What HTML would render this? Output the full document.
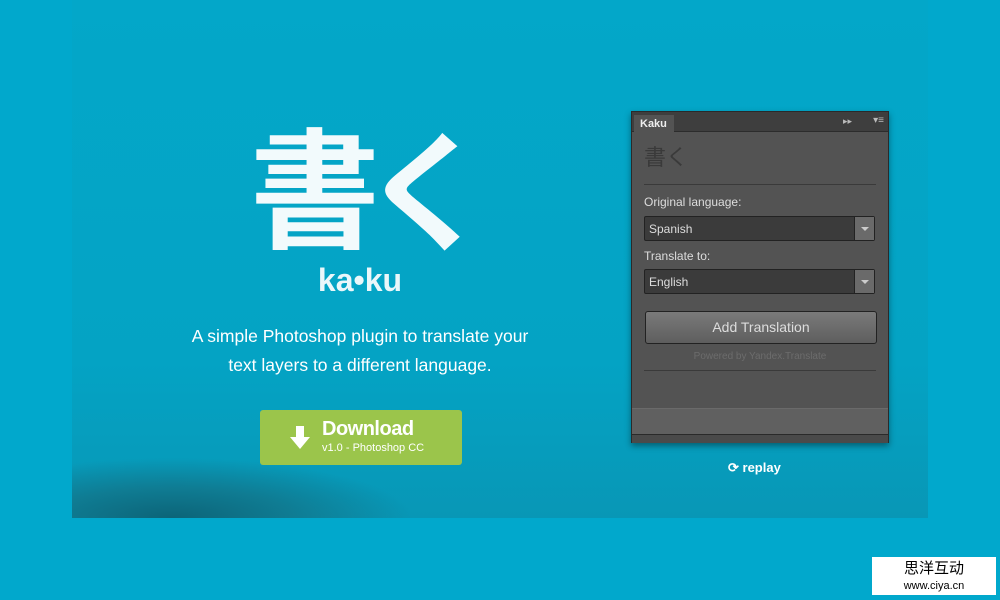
<!DOCTYPE html>
<html><head><meta charset="utf-8"><style>
*{margin:0;padding:0;box-sizing:border-box}
body{width:1000px;height:600px;background:#01a8cc;position:relative;overflow:hidden;font-family:"Liberation Sans",sans-serif}
.hero{position:absolute;left:72px;top:0;width:856px;height:518px;background:linear-gradient(180deg,#03a7c9 0%,#04a3c4 70%,#0897b6 100%)}
.hill{position:absolute;left:72px;top:458px;width:400px;height:60px;background:radial-gradient(ellipse 60% 100% at 25% 100%,#0c6478 0%,#0f7c93 50%,rgba(4,160,195,0) 100%)}
.k{position:absolute;color:#f2fafc;font-family:"Noto Sans CJK JP",sans-serif;font-weight:bold;font-size:130px;line-height:1}
.kaku{position:absolute;left:300px;top:262px;width:120px;text-align:center;color:#eaf7fa;font-weight:bold;font-size:32px}
.tag{position:absolute;left:160px;top:322px;width:400px;text-align:center;color:#fff;font-size:17.5px;line-height:29px}
.dl{position:absolute;left:260px;top:410px;width:202px;height:55px;background:#9bc54b;border-radius:3px;color:#fff}
.panel{position:absolute;left:631px;top:111px;width:258px;height:332px;background:#535353;border:1px solid #2a2a2a;box-shadow:0 3px 6px rgba(0,0,0,.4);color:#ddd;font-size:12px}
.sel{position:absolute;left:12px;width:231px;height:25px;background:#3b3b3b;border:1px solid #222;border-radius:2px;color:#ddd;font-size:12px;padding:5px 4px}
.sel b{position:absolute;right:0;top:0;width:20px;height:23px;background:#6a6a6a;border-left:1px solid #222}
.sel b:after{content:"";position:absolute;left:6px;top:10px;border:4px solid transparent;border-top-color:#ccc}
</style></head><body>
<div class="hero"></div>
<div class="hill"></div>
<div class="k" style="left:250px;top:117px">書</div>
<div class="k" style="left:362px;top:119px">く</div>
<div class="kaku">ka•ku</div>
<div class="tag">A simple Photoshop plugin to translate your<br>text layers to a different language.</div>
<div class="dl">
<svg style="position:absolute;left:29px;top:16px" width="22" height="24" viewBox="0 0 22 24"><path d="M7 0h8v11h6L11 23 1 11h6z" fill="#fff"/></svg>
<div style="position:absolute;left:62px;top:8px;font-size:20px;font-weight:bold;letter-spacing:-.5px">Download</div>
<div style="position:absolute;left:62px;top:32px;font-size:11px">v1.0 - Photoshop CC</div>
</div>
<div class="panel">
<div style="height:20px;background:#3e3e3e;border-bottom:1px solid #2c2c2c"></div>
<div style="position:absolute;left:2px;top:3px;width:40px;height:18px;background:#535353;color:#eee;font-weight:bold;font-size:11px;padding:3px 6px">Kaku</div>
<div style="position:absolute;right:36px;top:4px;font-size:9px;color:#bbb">▸▸</div>
<div style="position:absolute;right:4px;top:3px;font-size:10px;color:#bbb">▾≡</div>
<div style="position:absolute;left:12px;top:33px;font-family:'Noto Sans CJK JP',sans-serif;font-size:22px;color:#3a3a3a;line-height:1">書く</div>
<div style="position:absolute;left:12px;top:72px;width:232px;height:1px;background:#3a3a3a"></div>
<div style="position:absolute;left:12px;top:83px">Original language:</div>
<div class="sel" style="top:104px">Spanish<b></b></div>
<div style="position:absolute;left:12px;top:137px">Translate to:</div>
<div class="sel" style="top:157px">English<b></b></div>
<div style="position:absolute;left:13px;top:199px;width:232px;height:33px;background:linear-gradient(#7a7a7a,#5e5e5e);border:1px solid #222;border-radius:3px;text-align:center;line-height:31px;font-size:14px;color:#ddd">Add Translation</div>
<div style="position:absolute;left:0;width:256px;top:239px;text-align:center;font-size:10px;color:#6c6c6c">Powered by Yandex.Translate</div>
<div style="position:absolute;left:12px;top:258px;width:232px;height:1px;background:#3a3a3a"></div>
<div style="position:absolute;left:0;top:296px;width:256px;height:26px;background:#606060;border-top:1px solid #6a6a6a"></div>
<div style="position:absolute;left:0;top:322px;width:256px;height:9px;background:#4a4a4a;border-top:1px solid #2a2a2a"></div>
</div>
<div style="position:absolute;left:728px;top:460px;color:#fff;font-size:13px;font-weight:bold">⟳ replay</div>
<div style="position:absolute;left:872px;top:557px;width:124px;height:38px;background:#fff;text-align:center;color:#000;font-family:'Noto Sans CJK SC',sans-serif;font-size:15px;line-height:16px;padding-top:3px">思洋互动<br><span style="font-size:11px;font-family:'Liberation Sans',sans-serif">www.ciya.cn</span></div>
</body></html>
